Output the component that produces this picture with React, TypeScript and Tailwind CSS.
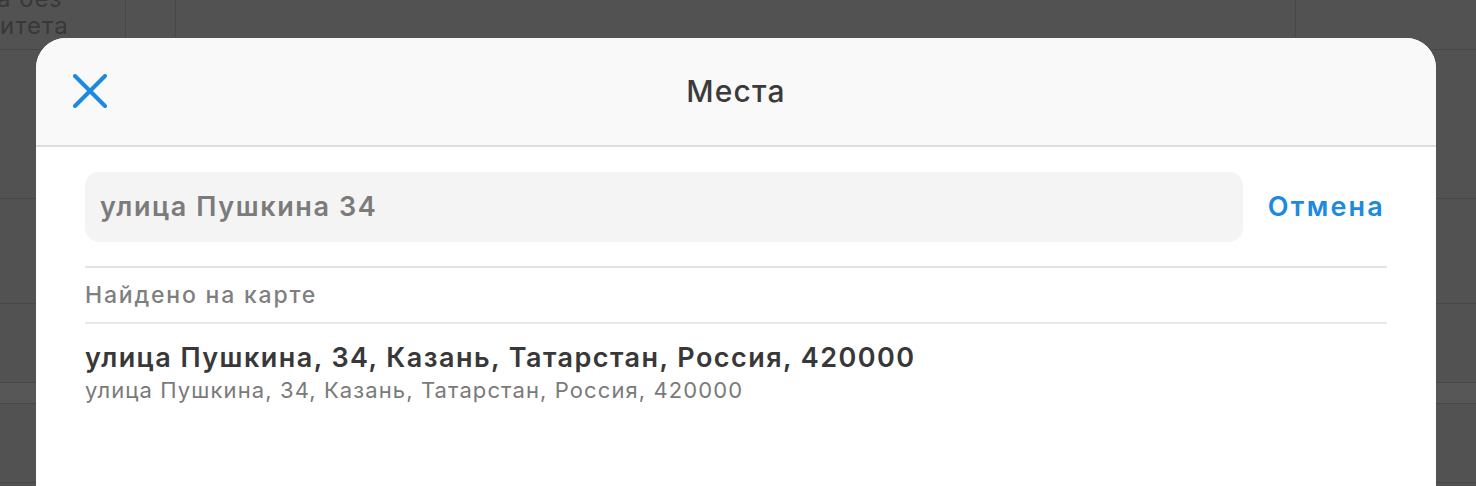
const rows = [
  { h: "h-[50px]", text: true, band: false },
  { h: "h-[149px]", text: false, band: false },
  { h: "h-[105px]", text: false, band: false },
  { h: "h-[79px]", text: false, band: false },
  { h: "h-[21px]", text: false, band: true },
  { h: "h-[79px]", text: false, band: false },
];

function BackgroundTable() {
  return (
    <div className="flex flex-col">
      {rows.map((row, i) => (
        <div
          key={i}
          className={`flex ${row.h} border-b border-[#474747] ${
            row.band ? "bg-[#575757]" : ""
          }`}
        >
          <div className="w-[126px] shrink-0 overflow-hidden border-r border-[#474747]">
            {row.text && (
              <div className="-mt-[15px] -ml-[3px] text-[24px] leading-[27px] tracking-[1px] text-[#383838]">
                <div>а без</div>
                <div className="ml-[3px]">итета</div>
              </div>
            )}
          </div>
          <div className="w-[50px] shrink-0 border-r border-[#474747]" />
          <div className="w-[1120px] shrink-0 border-r border-[#474747]" />
          <div className="flex-1" />
        </div>
      ))}
    </div>
  );
}

function CloseIcon() {
  return (
    <svg width="34" height="34" viewBox="0 0 34 34" fill="none">
      <path
        d="M2 2L32 32M32 2L2 32"
        stroke="currentColor"
        strokeWidth="4"
        strokeLinecap="round"
      />
    </svg>
  );
}

export default function App() {
  return (
    <div
      className="relative h-[486px] w-[1476px] overflow-hidden bg-[#525252]"
      style={{ fontFamily: "Inter, 'Noto Sans', sans-serif" }}
    >
      <BackgroundTable />

      {/* Modal */}
      <div className="absolute left-[36px] top-[38px] h-[460px] w-[1400px] overflow-hidden rounded-t-[30px] bg-white">
        {/* Header */}
        <div className="relative flex h-[109px] items-center justify-center border-b-2 border-[#dedede] bg-[#f9f9f9]">
          <button className="absolute left-[37px] top-[36px] text-[#1b8ae0]">
            <CloseIcon />
          </button>
          <h1 className="text-[30px] font-medium tracking-[1.2px] text-[#3b3b3b]">
            Места
          </h1>
        </div>

        {/* Body */}
        <div className="px-[49px] pt-[25px]">
          <div className="flex items-center gap-[25px]">
            <div className="flex h-[70px] flex-1 items-center rounded-[14px] bg-[#f4f4f4] px-[15px]">
              <span className="text-[27px] font-semibold tracking-[1.6px] text-[#7b7b7b]">
                улица Пушкина 34
              </span>
            </div>
            <button className="pr-[2px] text-[27px] font-semibold tracking-[2.2px] text-[#1b8ae0]">
              Отмена
            </button>
          </div>

          <div className="mt-[24px] border-t-2 border-[#e4e4e4]" />
          <div className="flex h-[54px] items-center text-[23px] font-medium tracking-[1.8px] text-[#7f7f7f]">
            Найдено на карте
          </div>
          <div className="border-t-2 border-[#e9e9e9]" />

          <div className="pt-[17px]">
            <div className="text-[27px] font-semibold leading-[34px] tracking-[1.45px] text-[#383838]">
              улица Пушкина, 34, Казань, Татарстан, Россия, 420000
            </div>
            <div className="text-[22px] leading-[30px] tracking-[1.1px] text-[#7a7a7a]">
              улица Пушкина, 34, Казань, Татарстан, Россия, 420000
            </div>
          </div>
        </div>
      </div>
    </div>
  );
}
